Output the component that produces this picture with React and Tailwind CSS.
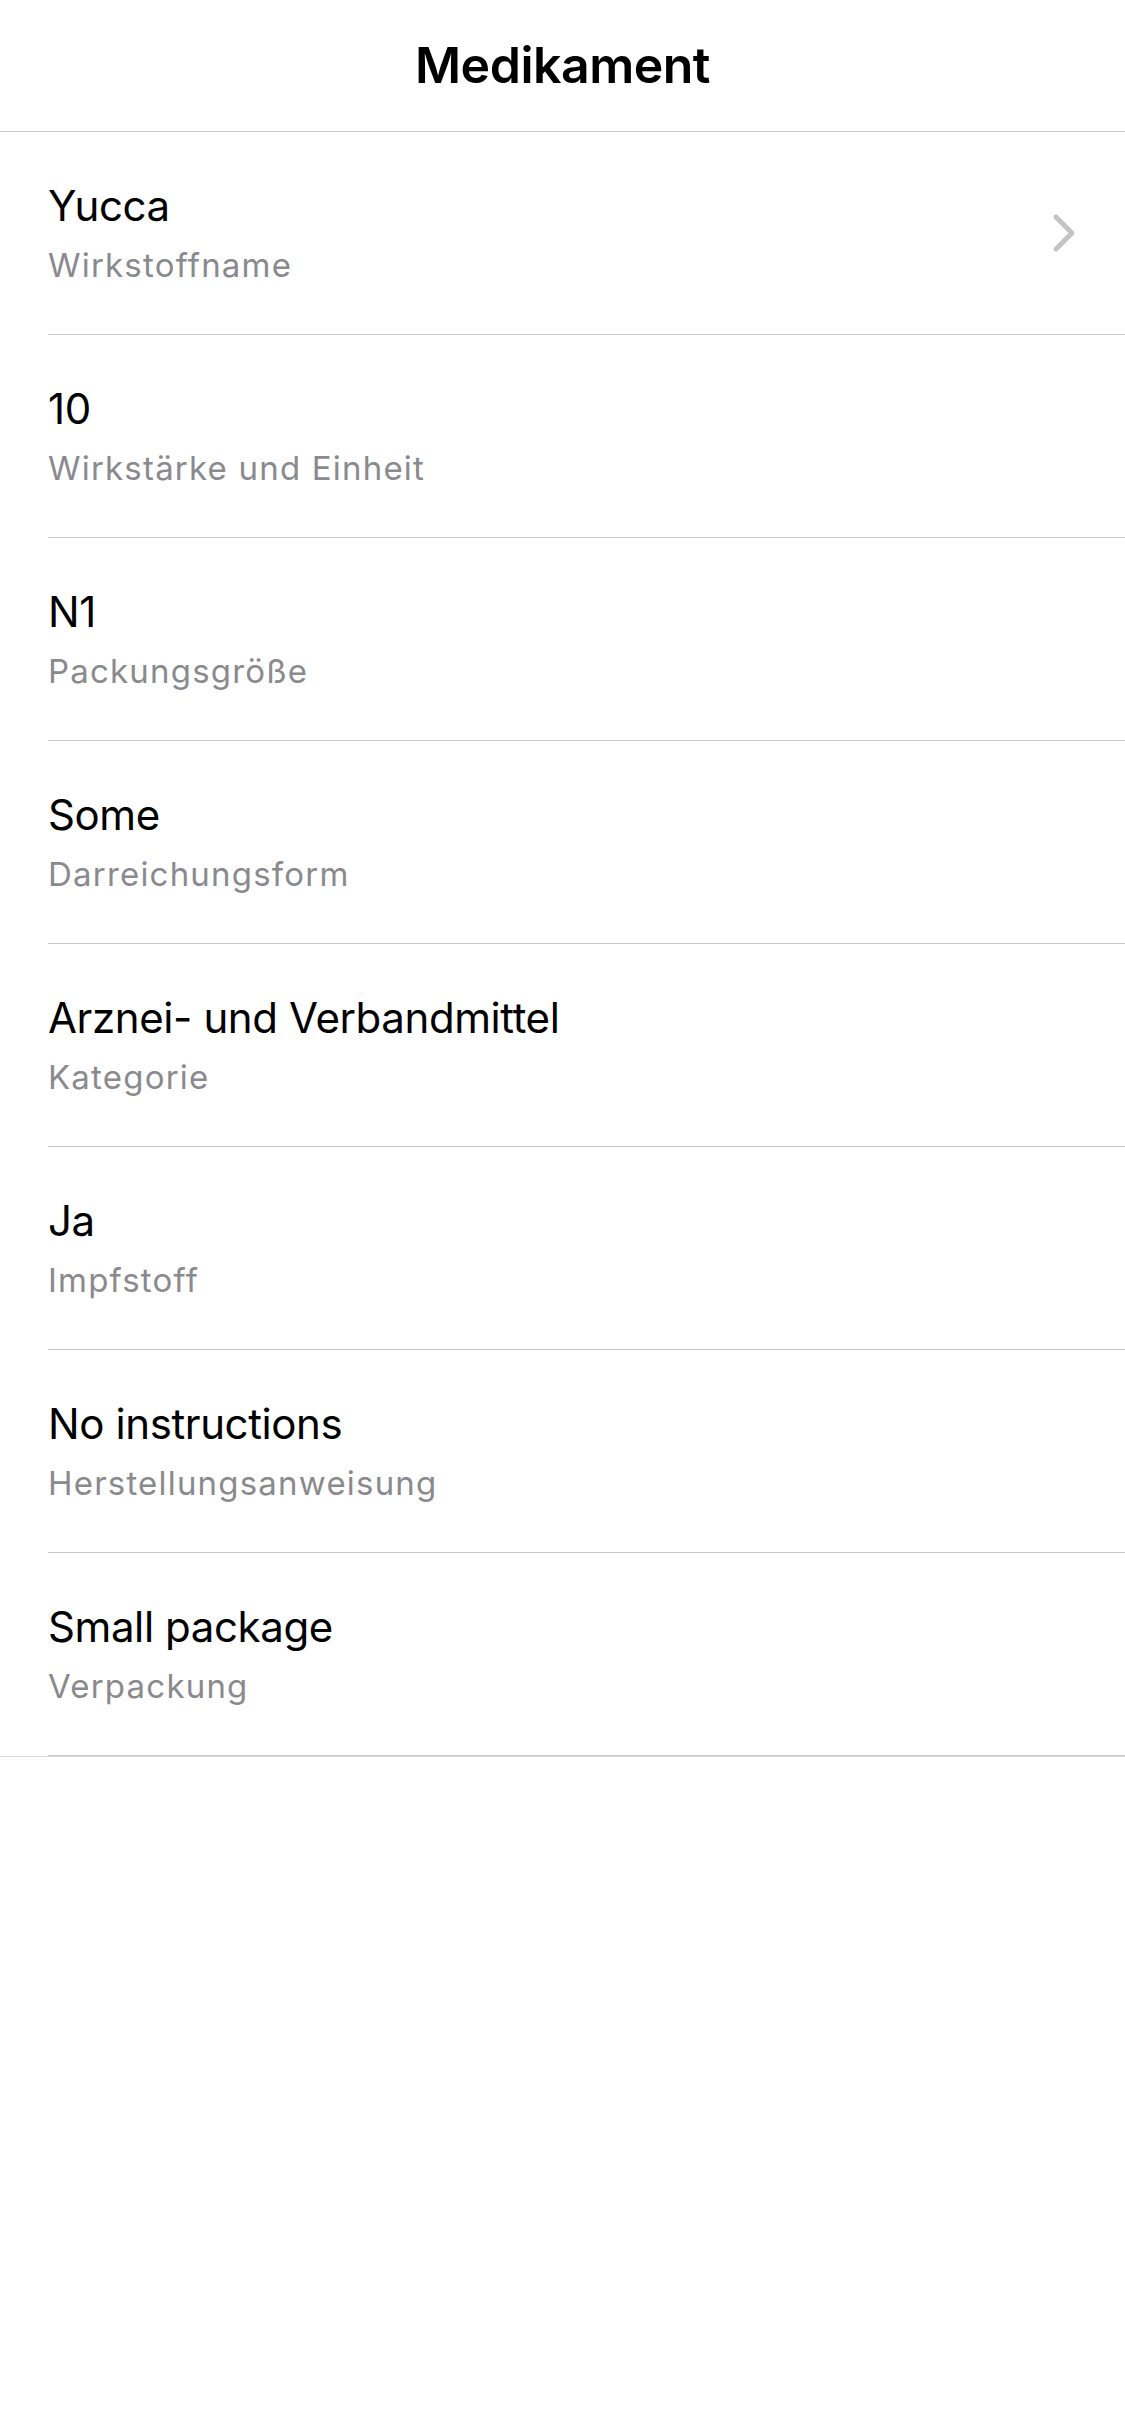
import React from 'react'

const rows = [
  { value: 'Yucca', label: 'Wirkstoffname', link: true },
  { value: '10', label: 'Wirkstärke und Einheit' },
  { value: 'N1', label: 'Packungsgröße' },
  { value: 'Some', label: 'Darreichungsform' },
  { value: 'Arznei- und Verbandmittel', label: 'Kategorie' },
  { value: 'Ja', label: 'Impfstoff' },
  { value: 'No instructions', label: 'Herstellungsanweisung' },
  { value: 'Small package', label: 'Verpackung' },
]

const Chevron = () => (
  <svg width="24" height="40" viewBox="0 0 24 40" fill="none">
    <path
      d="M4 4 L20 20 L4 36"
      stroke="#c4c4c7"
      strokeWidth="5"
      strokeLinecap="round"
      strokeLinejoin="round"
    />
  </svg>
)

const Row = ({ value, label, link, last }) => {
  return (
    <div className={`pl-[48px] ${last ? 'border-b border-[#d8d8dc]' : ''}`}>
      <div className="flex h-[203px] items-center border-b border-[#c8c7cc] pr-[49px]">
        <div className="flex flex-1 flex-col gap-[14px]">
          <span className="text-[42px] leading-[50px] tracking-[-0.4px] text-black">{value}</span>
          <span className="text-[33px] leading-[40px] tracking-[1.2px] text-[#8a8a8e]">{label}</span>
        </div>
        {link && <Chevron />}
      </div>
    </div>
  )
}

const App = () => {
  return (
    <div className="min-h-screen w-full bg-white" style={{ fontFamily: 'Inter, "Noto Sans", sans-serif' }}>
      <header className="flex h-[132px] items-center justify-center border-b border-[#c8c7cc]">
        <h1 className="text-[50px] font-semibold tracking-[-0.5px] text-black">Medikament</h1>
      </header>
      <div className="flex flex-col">
        {rows.map((r, i) => (
          <Row key={r.label} {...r} last={i === rows.length - 1} />
        ))}
      </div>
    </div>
  )
}

export default App
